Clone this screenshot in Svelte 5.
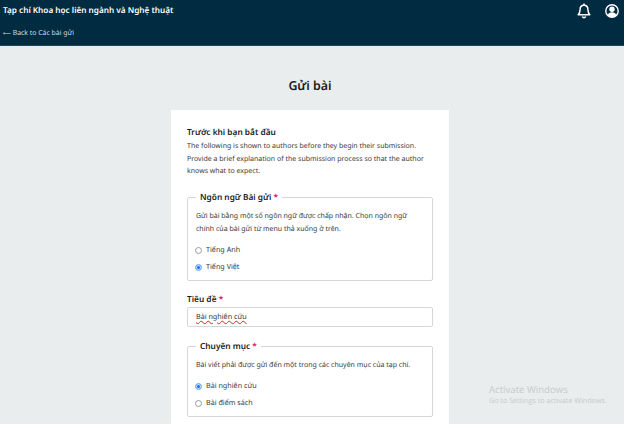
<script>
  // Ngôn ngữ và chuyên mục đang chọn
  let locale = 'vi';
  let section = 'article';

  const locales = [
    { id: 'en', label: 'Tiếng Anh' },
    { id: 'vi', label: 'Tiếng Việt' }
  ];
  const sections = [
    { id: 'article', label: 'Bài nghiên cứu' },
    { id: 'review', label: 'Bài điểm sách' }
  ];
</script>

<div class="page">
  <header class="topbar">
    <div class="topbar-row">
      <span class="journal">Tạp chí Khoa học liên ngành và Nghệ thuật</span>
      <div class="topbar-icons">
        <svg width="16" height="16" viewBox="0 0 16 16" fill="none" stroke="#fff" stroke-width="1.5" stroke-linejoin="round">
          <path d="M8 2.200c-2.600 0-3.900 2-3.900 4.300 0 2.600-.7 4-1.900 5.300h11.600c-1.200-1.300-1.900-2.700-1.900-5.300C11.900 4.200 10.600 2.200 8 2.200z" />
          <path d="M6.400 13.300c.2.900.8 1.400 1.600 1.400s1.400-.5 1.600-1.400" />
          <path d="M8 .6v1.600" />
        </svg>
        <svg width="16" height="16" viewBox="0 0 16 16">
          <circle cx="8" cy="8" r="6.200" fill="#002b40" stroke="#fff" stroke-width="1.400" />
          <circle cx="8" cy="6.300" r="2.700" fill="#fff" />
          <path d="M3.400 12.200c.8-2 2.600-3 4.600-3s3.800 1 4.600 3c-1.200 1.300-2.800 2-4.600 2s-3.400-.7-4.600-2z" fill="#fff" />
        </svg>
      </div>
    </div>
    <a class="back" href="#back"><span class="arrow">⟵</span> Back to Các bài gửi</a>
  </header>

  <main class="content">
    <h1>Gửi bài</h1>

    <form class="card">
      <h2>Trước khi bạn bắt đầu</h2>
      <p class="intro">
        The following is shown to authors before they begin their submission.
        Provide a brief explanation of the submission process so that the author
        knows what to expect.
      </p>

      <fieldset class="locale-group">
        <legend>Ngôn ngữ Bài gửi <span class="req">*</span></legend>
        <p class="hint">Gửi bài bằng một số ngôn ngữ được chấp nhận. Chọn ngôn ngữ chính của bài gửi từ menu thả xuống ở trên.</p>
        {#each locales as item}
          <label class="option">
            <input type="radio" name="locale" value={item.id} bind:group={locale} />
            {item.label}
          </label>
        {/each}
      </fieldset>

      <div class="field">
        <div class="field-label">Tiêu đề <span class="req">*</span></div>
        <div class="text-input"><span class="misspelt">Bài nghiên cứu</span></div>
      </div>

      <fieldset class="section-group">
        <legend>Chuyên mục <span class="req">*</span></legend>
        <p class="hint">Bài viết phải được gửi đến một trong các chuyên mục của tạp chí.</p>
        {#each sections as item}
          <label class="option">
            <input type="radio" name="section" value={item.id} bind:group={section} />
            {item.label}
          </label>
        {/each}
      </fieldset>
    </form>
  </main>

  <div class="watermark">
    <div class="wm-title">Activate Windows</div>
    <div class="wm-sub">Go to Settings to activate Windows.</div>
  </div>
</div>

<style>
  :global(body) {
    margin: 0;
    background: #eaedee;
    font-family: "Noto Sans", "Open Sans", sans-serif;
    text-rendering: geometricPrecision;
    overflow: hidden;
  }

  .page {
    position: relative;
    height: 424px;
    overflow: hidden;
  }

  .topbar {
    height: 46px;
    box-sizing: border-box;
    background: #002b40;
    border-bottom: 1px solid #1c4558;
    color: #fff;
    padding: 0 4px 0 3px;
  }

  .topbar-row {
    display: flex;
    justify-content: space-between;
    align-items: center;
    height: 21px;
  }

  .journal {
    font-size: 8.200px;
    font-weight: 600;
  }

  .topbar-icons {
    display: flex;
    gap: 12px;
    margin-top: 1px;
  }

  .back {
    display: block;
    margin-top: 4px;
    font-size: 6.900px;
    line-height: 17px;
    color: #d5dde1;
    text-decoration: none;
  }

  .arrow {
    font-family: "DejaVu Sans", sans-serif;
    font-size: 5.500px;
  }

  .content {
    display: flex;
    flex-direction: column;
    align-items: center;
    padding-right: 4px;
  }

  h1 {
    margin: 31px 0 15px;
    font-size: 12.400px;
    line-height: 18px;
    font-weight: 600;
    color: #1b1b1b;
  }

  .card {
    width: 278px;
    box-sizing: border-box;
    background: #fff;
    padding: 16px 16px 20px;
  }

  h2 {
    margin: 0;
    font-size: 8.300px;
    line-height: 13px;
    font-weight: 600;
    color: #222;
  }

  .intro {
    margin: 2px 0 0;
    font-size: 7px;
    line-height: 12.500px;
    color: #3a3a3a;
  }

  fieldset {
    margin: 0;
    border: 1px solid #d5d8da;
    border-radius: 2px;
    padding: 0 8px;
    box-sizing: border-box;
  }

  .locale-group {
    margin-top: 13px;
    height: 89px;
  }

  .section-group {
    margin-top: 14px;
    height: 76px;
  }

  legend {
    padding: 0 4px;
    font-size: 8.300px;
    line-height: 12px;
    font-weight: 600;
    color: #222;
  }

  .req {
    color: #d00a6c;
  }

  .hint {
    margin: 6px 0 6px;
    font-size: 7px;
    line-height: 13px;
    color: #3a3a3a;
  }

  .option {
    display: flex;
    align-items: center;
    gap: 4px;
    height: 17px;
    font-size: 7.200px;
    color: #3a3a3a;
  }

  .option input {
    appearance: none;
    margin: 0 0 0 -1px;
    width: 7px;
    height: 7px;
    box-sizing: border-box;
    border: 1px solid #9a9a9a;
    border-radius: 50%;
    background: #fff;
  }

  .option input:checked {
    border: 1px solid #8ab8f5;
    background: #0d6efd;
    box-shadow: inset 0 0 0 1px #cfe2fb;
  }

  .field {
    margin-top: 12px;
  }

  .field-label {
    font-size: 8.300px;
    line-height: 13px;
    font-weight: 600;
    color: #222;
    margin-bottom: 1px;
  }

  .text-input {
    height: 20px;
    box-sizing: border-box;
    border: 1px solid #d5d8da;
    border-radius: 2px;
    padding: 0 8px;
    font-size: 7.200px;
    line-height: 18px;
    color: #333;
  }

  .misspelt {
    text-decoration: underline wavy #e02020 0.5px;
  }

  .watermark {
    position: absolute;
    left: 489px;
    top: 383px;
    color: #c6c9cb;
    font-family: "Open Sans", "Noto Sans", sans-serif;
    pointer-events: none;
  }

  .wm-title {
    font-size: 9.600px;
    line-height: 13px;
  }

  .wm-sub {
    font-size: 7.200px;
    line-height: 11px;
  }
</style>
